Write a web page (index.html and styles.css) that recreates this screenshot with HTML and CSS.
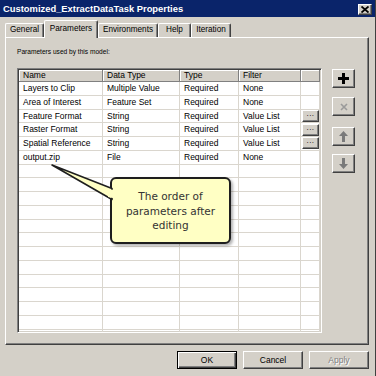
FILE: index.html
```html
<!DOCTYPE html>
<html>
<head>
<meta charset="utf-8">
<link rel="stylesheet" href="styles.css">
</head>
<body>
<div class="window">
  <div class="titlebar">
    <span class="title">Customized_ExtractDataTask Properties</span>
    <span class="close"><svg width="8" height="7" viewBox="0 0 8 7"><path d="M0.5 0.5 L7.5 6.5 M7.5 0.5 L0.5 6.5" stroke="#000" stroke-width="1.8"/></svg></span>
  </div>
  <div class="tabs">
    <div class="tab w-general">General</div>
    <div class="tab active w-params">Parameters</div>
    <div class="tab w-env">Environments</div>
    <div class="tab w-help">Help</div>
    <div class="tab w-iter">Iteration</div>
  </div>
  <div class="panel">
    <div class="label">Parameters used by this model:</div>
    <div class="content">
      <div class="table">
        <div class="grid">
          <div class="hd">Name</div><div class="hd">Data Type</div><div class="hd">Type</div><div class="hd">Filter</div><div class="hd"></div>

          <div class="c">Layers to Clip</div><div class="c">Multiple Value</div><div class="c">Required</div><div class="c">None</div><div class="c"></div>
          <div class="c">Area of Interest</div><div class="c">Feature Set</div><div class="c">Required</div><div class="c">None</div><div class="c"></div>
          <div class="c">Feature Format</div><div class="c">String</div><div class="c">Required</div><div class="c">Value List</div><div class="c btncell"><span class="dots">...</span></div>
          <div class="c">Raster Format</div><div class="c">String</div><div class="c">Required</div><div class="c">Value List</div><div class="c btncell"><span class="dots">...</span></div>
          <div class="c">Spatial Reference</div><div class="c">String</div><div class="c">Required</div><div class="c">Value List</div><div class="c btncell"><span class="dots">...</span></div>
          <div class="c">output.zip</div><div class="c">File</div><div class="c">Required</div><div class="c">None</div><div class="c"></div>

          <div class="c"></div><div class="c"></div><div class="c"></div><div class="c"></div><div class="c"></div>
          <div class="c"></div><div class="c"></div><div class="c"></div><div class="c"></div><div class="c"></div>
          <div class="c"></div><div class="c"></div><div class="c"></div><div class="c"></div><div class="c"></div>
          <div class="c"></div><div class="c"></div><div class="c"></div><div class="c"></div><div class="c"></div>
          <div class="c"></div><div class="c"></div><div class="c"></div><div class="c"></div><div class="c"></div>
          <div class="c"></div><div class="c"></div><div class="c"></div><div class="c"></div><div class="c"></div>
          <div class="c"></div><div class="c"></div><div class="c"></div><div class="c"></div><div class="c"></div>
          <div class="c"></div><div class="c"></div><div class="c"></div><div class="c"></div><div class="c"></div>
          <div class="c"></div><div class="c"></div><div class="c"></div><div class="c"></div><div class="c"></div>
          <div class="c"></div><div class="c"></div><div class="c"></div><div class="c"></div><div class="c"></div>
          <div class="c"></div><div class="c"></div><div class="c"></div><div class="c"></div><div class="c"></div>
          <div class="c"></div><div class="c"></div><div class="c"></div><div class="c"></div><div class="c"></div>
          <div class="c"></div><div class="c"></div><div class="c"></div><div class="c"></div><div class="c"></div>
        </div>
      </div>
      <div class="side">
        <div class="sbtn b-add"><svg width="11" height="11" viewBox="0 0 11 11"><path d="M4 0h3v4h4v3H7v4H4V7H0V4h4z" fill="#000"/></svg></div>
        <div class="sbtn b-del"><svg width="8" height="8" viewBox="0 0 8 8"><path d="M1 1 L7 7 M7 1 L1 7" stroke="#9a9a9a" stroke-width="1.6"/></svg></div>
        <div class="sbtn b-up"><svg width="9" height="11" viewBox="0 0 9 11"><path d="M4.5 0 L9 5 H6 V11 H3 V5 H0 Z" fill="#7a7a7a"/></svg></div>
        <div class="sbtn b-down"><svg width="9" height="11" viewBox="0 0 9 11"><path d="M4.5 11 L9 6 H6 V0 H3 V6 H0 Z" fill="#7a7a7a"/></svg></div>
      </div>
    </div>
  </div>
  <div class="actions">
    <div class="btn default">OK</div>
    <div class="btn">Cancel</div>
    <div class="btn disabled">Apply</div>
  </div>

  <div class="callout">The order of<br>parameters after<br>editing</div>
  <svg class="pointer" width="376" height="376" viewBox="0 0 376 376">
    <polygon points="112,188.5 52,165 112,199.5" fill="#ffffc4" stroke="#1e1e1e" stroke-width="1.6" stroke-linejoin="round"/>
    <polygon points="108,189.8 114,189.8 114,198.3 108,197" fill="#ffffc4"/>
  </svg>
</div>
</body>
</html>
```

FILE: styles.css
```css
* { box-sizing: border-box; }
html, body { margin: 0; padding: 0; }
body {
  width: 376px;
  height: 376px;
  overflow: hidden;
  background: #d4d0c8;
  font-family: "Liberation Sans", Arial, sans-serif;
  color: #000;
}
.window {
  position: relative;
  width: 376px;
  height: 376px;
  background: #d4d0c8;
  border-right: 1px solid #404040;
}
.titlebar {
  height: 17px;
  background: #0a246a;
  display: flex;
  align-items: center;
  justify-content: space-between;
  padding: 0 3px 0 3px;
}
.title {
  color: #fff;
  font-weight: bold;
  font-size: 9.4px;
  letter-spacing: 0;
  line-height: 17px;
}
.close {
  width: 14px;
  height: 11px;
  background: #d4d0c8;
  border: 1px solid;
  border-color: #fff #404040 #404040 #fff;
  box-shadow: inset -1px -1px 0 #808080;
  display: flex;
  align-items: center;
  justify-content: center;
  margin-top: 1px;
}
.tabs {
  height: 20px;
  display: flex;
  align-items: flex-end;
  padding-left: 5px;
}
.tab {
  height: 14px;
  font-size: 8.2px;
  line-height: 12px;
  text-align: center;
  background: #d4d0c8;
  border-top: 1px solid #fff;
  border-left: 1px solid #fff;
  border-right: 1px solid #404040;
  box-shadow: inset -1px 0 0 #808080;
  border-radius: 2px 2px 0 0;
}
.tab.active {
  height: 18px;
  margin-bottom: -1px;
  z-index: 2;
  line-height: 15px;
  border-bottom: none;
}
.w-general { width: 39px; }
.w-params { width: 54px; }
.w-env { width: 60px; }
.w-help { width: 33px; }
.w-iter { width: 40px; }

.panel {
  margin-left: 5px;
  width: 364px;
  height: 308px;
  border: 1px solid;
  border-color: #fff #404040 #404040 #fff;
  box-shadow: inset -1px -1px 0 #808080;
  padding: 9px 11px 0 11px;
}
.label {
  font-size: 6.6px;
  line-height: 9px;
  height: 9px;
  margin-bottom: 12px;
  padding-left: 0;
}
.content {
  display: flex;
  align-items: flex-start;
}
.table {
  width: 305px;
  height: 265px;
  overflow: hidden;
  background: #fff;
  border: 1px solid;
  border-color: #808080 #fff #fff #808080;
  box-shadow: inset 1px 1px 0 #404040, inset -1px -1px 0 #d4d0c8;
  padding: 1px 1px 1px 1px;
}
.grid {
  display: grid;
  grid-template-columns: 84px 77px 59px 62px 19px;
  grid-template-rows: 12px;
  grid-auto-rows: 13.75px;
  font-size: 8.5px;
}
.hd {
  background: #d4d0c8;
  border-right: 1px solid #808080;
  border-bottom: 1px solid #808080;
  box-shadow: inset 1px 1px 0 #fff;
  line-height: 11px;
  padding-left: 4px;
  white-space: nowrap;
}
.c {
  border-right: 1px solid #dad6ce;
  border-bottom: 1px solid #dad6ce;
  line-height: 12.5px;
  padding-left: 4px;
  white-space: nowrap;
  overflow: hidden;
}
.btncell {
  padding: 0 0 0 1px;
  display: flex;
  align-items: center;
}
.dots {
  width: 17px;
  height: 12px;
  background: #d4d0c8;
  border: 1px solid;
  border-color: #fff #404040 #404040 #fff;
  box-shadow: inset -1px -1px 0 #808080;
  font-size: 8px;
  line-height: 6px;
  text-align: center;
  letter-spacing: 0.5px;
}
.side {
  margin-left: 10px;
  display: flex;
  flex-direction: column;
}
.sbtn {
  width: 23px;
  height: 19px;
  background: #d4d0c8;
  border: 1px solid;
  border-color: #fff #404040 #404040 #fff;
  box-shadow: inset -1px -1px 0 #808080;
  display: flex;
  align-items: center;
  justify-content: center;
}
.b-add { margin-top: 1px; }
.b-del { margin-top: 9px; }
.b-up { margin-top: 11px; }
.b-down { margin-top: 8px; }

.actions {
  display: flex;
  justify-content: flex-end;
  gap: 6px;
  margin-top: 6px;
  padding-right: 6px;
}
.btn {
  width: 60px;
  height: 18px;
  font-size: 8.5px;
  line-height: 16px;
  text-align: center;
  border: 1px solid;
  border-color: #fff #404040 #404040 #fff;
  box-shadow: inset -1px -1px 0 #808080;
  background: #d4d0c8;
}
.btn.default {
  border-color: #000;
  box-shadow: inset 1px 1px 0 #fff, inset -1px -1px 0 #404040, inset -2px -2px 0 #808080;
}
.btn.disabled {
  color: #808080;
  text-shadow: 1px 1px 0 #fff;
}

.callout {
  position: absolute;
  left: 110px;
  top: 177px;
  width: 121px;
  height: 67px;
  background: #ffffc4;
  border: 2px solid #1e1e1e;
  border-radius: 6px;
  box-shadow: 2px 2px 3px rgba(0,0,0,0.3);
  font-family: "DejaVu Sans", Verdana, sans-serif;
  font-size: 10.5px;
  line-height: 14.5px;
  color: #333;
  text-align: center;
  padding-top: 10px;
}
.pointer {
  position: absolute;
  left: 0;
  top: 0;
  pointer-events: none;
}
```
